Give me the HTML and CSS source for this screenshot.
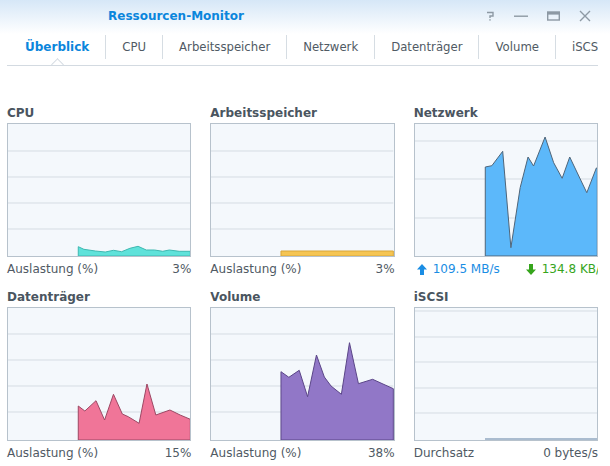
FILE: index.html
```html
<!DOCTYPE html>
<html lang="de">
<head>
<meta charset="UTF-8">
<meta name="viewport" content="width=device-width, initial-scale=1.0">
<title>Ressourcen-Monitor</title>
<link rel="stylesheet" href="styles.css">
</head>
<body>
<div class="window">
    <div class="titlebar">
        <span class="title">Ressourcen-Monitor</span>
        <div class="controls">
            <svg width="10" height="10" viewBox="0 0 10 10"><path d="M2 1.5h6v3.5H5v2" fill="none" stroke="currentColor" stroke-width="1.4"/><rect x="4.3" y="8.2" width="1.4" height="1.4" fill="currentColor"/></svg>
            <svg width="14" height="10" viewBox="0 0 14 10"><rect x="0" y="4.5" width="14" height="1.4" fill="currentColor"/></svg>
            <svg width="13" height="10" viewBox="0 0 13 10"><rect x="0.7" y="1" width="11.6" height="8" fill="none" stroke="currentColor" stroke-width="1.4"/><rect x="0.7" y="1" width="11.6" height="2.6" fill="currentColor"/></svg>
            <svg width="12" height="12" viewBox="0 0 12 12"><path d="M1 1l10 10M11 1L1 11" stroke="currentColor" stroke-width="1.4"/></svg>
        </div>
    </div>

    <div class="tabs">
        <div class="tab active">Überblick</div>
        <div class="tab">CPU</div>
        <div class="tab">Arbeitsspeicher</div>
        <div class="tab">Netzwerk</div>
        <div class="tab">Datenträger</div>
        <div class="tab">Volume</div>
        <div class="tab">iSCSI</div>
    </div>

    <div class="grid">
        <div class="card">
            <div class="card-title">CPU</div>
            <div class="chart">
                <svg viewBox="0 0 185 132" preserveAspectRatio="none">
                    <g class="grid-lines"><line x1="0" x2="185" y1="27" y2="27"/><line x1="0" x2="185" y1="53" y2="53"/><line x1="0" x2="185" y1="79" y2="79"/><line x1="0" x2="185" y1="105" y2="105"/></g>
                    <polygon class="area cpu" points="71.3,132 71.3,122.7 77,125.3 88.7,127 98.7,128 107,126.3 115.3,127.7 123.7,124.3 132,122.3 140.3,126 148.7,126 157,127.3 163.7,126 173.7,127.3 185,127.3 185,132"/>
                </svg>
            </div>
            <div class="card-foot"><span>Auslastung (%)</span><span>3%</span></div>
        </div>

        <div class="card">
            <div class="card-title">Arbeitsspeicher</div>
            <div class="chart">
                <svg viewBox="0 0 185 132" preserveAspectRatio="none">
                    <g class="grid-lines"><line x1="0" x2="185" y1="27" y2="27"/><line x1="0" x2="185" y1="53" y2="53"/><line x1="0" x2="185" y1="79" y2="79"/><line x1="0" x2="185" y1="105" y2="105"/></g>
                    <polygon class="area mem" points="71,132 71,127 185,127 185,132"/>
                </svg>
            </div>
            <div class="card-foot"><span>Auslastung (%)</span><span>3%</span></div>
        </div>

        <div class="card">
            <div class="card-title">Netzwerk</div>
            <div class="chart">
                <svg viewBox="0 0 185 132" preserveAspectRatio="none">
                    <g class="grid-lines"><line x1="0" x2="185" y1="17" y2="17"/><line x1="0" x2="185" y1="55" y2="55"/><line x1="0" x2="185" y1="94" y2="94"/></g>
                    <polygon class="area net" points="71.3,132 71.3,43 78,41.7 89,27.3 97.3,123.7 106.7,63.7 114.7,33 120.3,42 132,13 140.7,38.7 149.3,54.3 157,33 165.7,51 174.3,68.7 184,44 185,44 185,132"/>
                </svg>
            </div>
            <div class="card-foot net-foot">
                <span class="rate up"><svg width="10" height="11" viewBox="0 0 10 11"><path d="M5 0L10 5.5H7V11H3V5.5H0Z" fill="currentColor"/></svg>109.5 MB/s</span>
                <span class="rate down"><svg width="10" height="11" viewBox="0 0 10 11"><path d="M5 11L10 5.5H7V0H3V5.5H0Z" fill="currentColor"/></svg>134.8 KB/s</span>
            </div>
        </div>

        <div class="card">
            <div class="card-title">Datenträger</div>
            <div class="chart">
                <svg viewBox="0 0 185 132" preserveAspectRatio="none">
                    <g class="grid-lines"><line x1="0" x2="185" y1="26" y2="26"/><line x1="0" x2="185" y1="52" y2="52"/><line x1="0" x2="185" y1="78" y2="78"/><line x1="0" x2="185" y1="104" y2="104"/></g>
                    <polygon class="area disk" points="71.3,132 71.3,98 78,103 89.3,92.7 98,112 107,86.3 116,106 122,108.7 133,115.3 141,76 150,107 164.3,102 174.7,107 185,111.3 185,132"/>
                </svg>
            </div>
            <div class="card-foot"><span>Auslastung (%)</span><span>15%</span></div>
        </div>

        <div class="card">
            <div class="card-title">Volume</div>
            <div class="chart">
                <svg viewBox="0 0 185 132" preserveAspectRatio="none">
                    <g class="grid-lines"><line x1="0" x2="185" y1="26" y2="26"/><line x1="0" x2="185" y1="52" y2="52"/><line x1="0" x2="185" y1="78" y2="78"/><line x1="0" x2="185" y1="104" y2="104"/></g>
                    <polygon class="area vol" points="71,132 71,63.7 79,69.3 89.5,62.3 98,88.7 107,47 115,69 121.8,78 132.3,86.3 140.5,34.7 149.6,75.7 164,71.3 174.5,76 185,80.7 185,132"/>
                </svg>
            </div>
            <div class="card-foot"><span>Auslastung (%)</span><span>38%</span></div>
        </div>

        <div class="card">
            <div class="card-title">iSCSI</div>
            <div class="chart">
                <svg viewBox="0 0 185 132" preserveAspectRatio="none">
                    <g class="grid-lines"><line x1="0" x2="185" y1="3" y2="3"/><line x1="0" x2="185" y1="29" y2="29"/><line x1="0" x2="185" y1="54" y2="54"/><line x1="0" x2="185" y1="80" y2="80"/><line x1="0" x2="185" y1="105" y2="105"/></g>
                    <polyline class="flat" points="71,131 185,131"/>
                </svg>
            </div>
            <div class="card-foot"><span>Durchsatz</span><span>0 bytes/s</span></div>
        </div>
    </div>
</div>
</body>
</html>
```

FILE: styles.css
```css
body {
    margin: 0;
    font-family: "DejaVu Sans", Verdana, sans-serif;
    font-size: 12px;
    color: #505a64;
    background-color: #fff;
}
.window {
    width: 610px;
    height: 466px;
    overflow: hidden;
    background: linear-gradient(#d6e7f7, #fff 34px);
}

/* title bar */
.titlebar {
    display: flex;
    align-items: center;
    height: 28px;
    padding: 2px 19px 0 108px;
}
.title {
    font-weight: bold;
    color: #0b86dc;
}
.controls {
    margin-left: auto;
    display: flex;
    align-items: center;
    gap: 19px;
    color: #8d99a4;
}

/* tabs */
.tabs {
    display: flex;
    align-items: center;
    width: 591px;
    margin-left: 7px;
    padding: 5px 0 6px 2px;
    border-bottom: 1px solid #d3dae1;
    box-sizing: border-box;
    height: 36px;
    overflow: hidden;
    white-space: nowrap;
}
.tab {
    position: relative;
    height: 24px;
    line-height: 24px;
    padding: 0 16px;
    border-left: 1px solid #d6dde3;
    flex-shrink: 0;
    font-size: 11.7px;
}
.tab:first-child {
    border-left: none;
}
.tab.active {
    font-weight: bold;
    font-size: 12px;
    color: #0b86dc;
}
.tab.active::after {
    content: "";
    position: absolute;
    left: 50%;
    bottom: -10px;
    width: 8px;
    height: 8px;
    margin-left: -4px;
    background-color: #fff;
    border-left: 1px solid #d3dae1;
    border-top: 1px solid #d3dae1;
    transform: rotate(45deg);
}

/* overview cards */
.grid {
    display: grid;
    grid-template-columns: repeat(3, minmax(0, 1fr));
    column-gap: 19px;
    row-gap: 12px;
    padding: 39px 12px 0 7px;
}
.card {
    min-width: 0;
}
.card-title {
    font-weight: bold;
    color: #4a5560;
    line-height: 16px;
    margin-bottom: 2px;
}
.chart {
    height: 134px;
    border: 1px solid #b7c2cc;
    background-color: #f4f8fc;
    box-sizing: border-box;
}
.chart svg {
    display: block;
    width: 100%;
    height: 100%;
}
.grid-lines line {
    stroke: #d5dce3;
    stroke-width: 1;
    vector-effect: non-scaling-stroke;
    shape-rendering: crispEdges;
}
.area {
    stroke-width: 1;
    vector-effect: non-scaling-stroke;
}
.area.cpu { fill: #5fe2da; stroke: #3fb8b1; }
.area.mem { fill: #f5c553; stroke: #d9a638; }
.area.net { fill: #5cb8fa; stroke: #4f6579; }
.area.disk { fill: #f07598; stroke: #9c4864; }
.area.vol { fill: #9177c7; stroke: #5b4688; }
.flat {
    fill: none;
    stroke: #92a8c0;
    stroke-width: 1.5;
    vector-effect: non-scaling-stroke;
}
.card-foot {
    display: flex;
    justify-content: space-between;
    line-height: 16px;
    margin-top: 4px;
    white-space: nowrap;
}
.net-foot {
    justify-content: flex-start;
    gap: 26px;
    padding-left: 3px;
    overflow: hidden;
}
.rate {
    display: flex;
    align-items: center;
    gap: 6px;
    flex-shrink: 0;
}
.rate.up { color: #1a8de4; }
.rate.down { color: #36a51c; }
```
